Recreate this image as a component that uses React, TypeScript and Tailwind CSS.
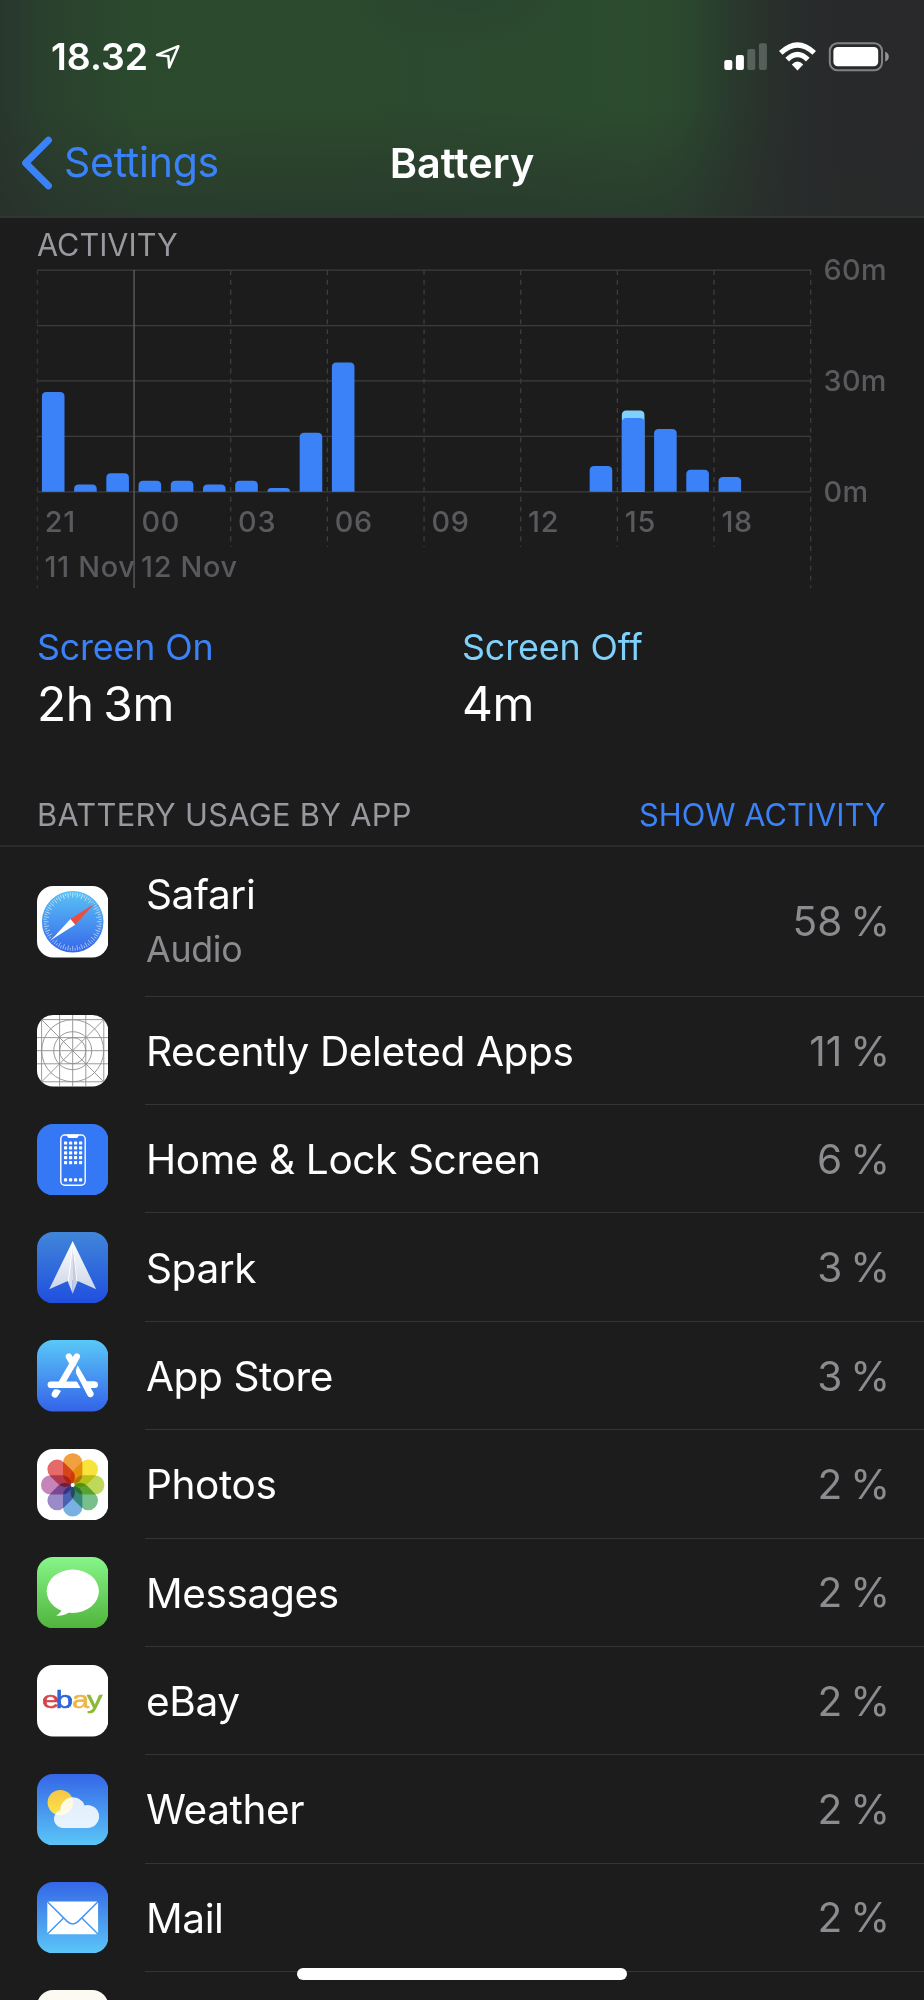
import type { ReactNode } from "react";

const ICON = "h-[71.4px] w-[71.4px] shrink-0";

const IconBase = ({
  id,
  from,
  to = from,
  children,
}: {
  id: string;
  from: string;
  to?: string;
  children?: ReactNode;
}) => (
  <svg viewBox="0 0 71.4 71.4" className={ICON}>
    <defs>
      <linearGradient
        id={id}
        gradientUnits="userSpaceOnUse"
        x1="0"
        y1="0"
        x2="0"
        y2="71.4"
      >
        <stop offset="0" stopColor={from} />
        <stop offset="1" stopColor={to} />
      </linearGradient>
      <clipPath id={`${id}-clip`}>
        <rect width="71.4" height="71.4" rx="16" />
      </clipPath>
    </defs>
    <rect width="71.4" height="71.4" rx="16" fill={`url(#${id})`} />
    <g clipPath={`url(#${id}-clip)`}>{children}</g>
  </svg>
);

const SafariIcon = () => (
  <IconBase id="safari" from="#ffffff">
    <defs>
      <linearGradient id="safari-dial" x1="0" y1="0" x2="0" y2="1">
        <stop offset="0" stopColor="#5bc3f5" />
        <stop offset="1" stopColor="#3567ea" />
      </linearGradient>
    </defs>
    <circle cx="35.7" cy="35.7" r="30.8" fill="url(#safari-dial)" />
    {Array.from({ length: 72 }, (_, i) => (
      <line
        key={i}
        x1="35.7"
        x2="35.7"
        y1="6.6"
        y2={i % 2 ? 9.4 : 11.6}
        stroke="#fff"
        strokeOpacity="0.75"
        strokeWidth="0.7"
        transform={`rotate(${i * 5} 35.7 35.7)`}
      />
    ))}
    <path d="M57.6 17.4 33.4 33.1 38.2 38.7Z" fill="#eb4e3d" />
    <path d="M14.4 53.8 33.4 33.1 38.2 38.7Z" fill="#fff" />
  </IconBase>
);

const PlaceholderIcon = () => (
  <IconBase id="placeholder" from="#ffffff">
    <g fill="none" stroke="#8f8f8f" strokeWidth="0.9">
      {[4.6, 22.6, 35.7, 48.8, 66.8].map((p) => (
        <path key={p} d={`M${p} 0V71.4M0 ${p}H71.4`} />
      ))}
      <path d="M0 0 71.4 71.4M71.4 0 0 71.4" />
      <circle cx="35.7" cy="35.7" r="31" />
      <circle cx="35.7" cy="35.7" r="19" />
      <circle cx="35.7" cy="35.7" r="13.1" />
    </g>
  </IconBase>
);

const HomeScreenIcon = () => (
  <IconBase id="home-screen" from="#3478f6">
    <rect
      x="23.8"
      y="11"
      width="24.4"
      height="50.2"
      rx="4"
      fill="none"
      stroke="#fff"
      strokeWidth="1.4"
    />
    <path d="M29.5 10.6h12.6l-1 2.4q-.5 1-1.6 1h-7.4q-1.1 0-1.6-1Z" fill="#fff" />
    {[17.4, 22.3, 27.2, 32.1, 37, 54.3].map((y) =>
      [27, 32, 37, 42].map((x) => (
        <rect key={`${x}-${y}`} x={x} y={y} width="3.2" height="3.2" rx="0.7" fill="#fff" />
      ))
    )}
  </IconBase>
);

const SparkIcon = () => (
  <IconBase id="spark" from="#4186d9" to="#1f4fdf">
    <defs>
      <linearGradient id="spark-plane" x1="0" y1="0" x2="0" y2="1">
        <stop offset="0" stopColor="#ffffff" />
        <stop offset="1" stopColor="#cdd6e8" />
      </linearGradient>
    </defs>
    <path d="M35.7 9 59.2 57.2 40.6 49 35.7 48 30.8 49 12.2 57.2Z" fill="url(#spark-plane)" />
    <path d="M35.7 12 40.8 49 35.7 61.8Z" fill="#c3cde0" />
    <path d="M35.7 12 30.6 49 35.7 61.8Z" fill="#d9e0ec" />
    <path d="M35.7 12 31.4 49M35.7 12 40 49" stroke="#fff" strokeWidth="1" />
  </IconBase>
);

const AppStoreIcon = () => (
  <IconBase id="app-store" from="#5ac8f8" to="#3463e8">
    <g fill="none" stroke="#fff" strokeWidth="6.4" strokeLinecap="round">
      <path d="M13.8 44.7H57.8" />
      <path d="M39.8 16.6 25 42.4" />
      <path d="M31.9 16.6 36 23.6" />
    </g>
    <path d="M10 47.9H30L23 54Z" fill="url(#app-store)" />
    <path d="M38.6 31 52 54.6" stroke="url(#app-store)" strokeWidth="8" />
    <path d="M44 41.5H58V47.9H48Z" fill="#fff" />
    <path
      d="M40.7 25.6Q38 30.4 39.4 34L50.4 55.2A3.2 3.2 0 0 0 56.4 52.6Z"
      fill="#fff"
    />
    <path
      d="M15 52.8 17 49.6Q20.6 48.4 24 50.9L21 55.8A3.2 3.2 0 0 1 15 52.8Z"
      fill="#fff"
    />
  </IconBase>
);

const petals = [
  "#f0a03f",
  "#f6e33c",
  "#bdd85a",
  "#77c08c",
  "#77b2e2",
  "#9a8bc8",
  "#c685ba",
  "#e56a68",
];

const PhotosIcon = () => (
  <IconBase id="photos" from="#ffffff">
    <g className="isolate">
      {petals.map((color, i) => (
        <rect
          key={color}
          x="26"
          y="4.2"
          width="19.4"
          height="30.8"
          rx="9.6"
          fill={color}
          className="mix-blend-multiply"
          transform={`rotate(${i * 45} 35.7 35.9)`}
        />
      ))}
    </g>
    <circle cx="35.7" cy="35.9" r="2" fill="#fff" />
  </IconBase>
);

const MessagesIcon = () => (
  <IconBase id="messages" from="#87f588" to="#50b43c">
    <ellipse cx="35.8" cy="34.2" rx="26.1" ry="21.7" fill="#fff" />
    <path d="M25.2 50.5Q24.6 56 19.2 58.6 26.5 59.4 32.4 55Z" fill="#fff" />
  </IconBase>
);

const ebayLetters = [
  { char: "e", x: 5, color: "#d8434b" },
  { char: "b", x: 18.8, color: "#2a66d8" },
  { char: "a", x: 35, color: "#f0b545" },
  { char: "y", x: 50, color: "#8bb932" },
];

const EbayIcon = () => (
  <IconBase id="ebay" from="#ffffff">
    {ebayLetters.map((l) => (
      <text
        key={l.char}
        transform={`translate(${l.x} 42.6) scale(1.26 1)`}
        fontFamily="Liberation Sans, sans-serif"
        fontSize="24.5"
        fill={l.color}
        stroke={l.color}
        strokeWidth="0.6"
      >
        {l.char}
      </text>
    ))}
  </IconBase>
);

const WeatherIcon = () => (
  <IconBase id="weather" from="#3566e7" to="#5bc6f7">
    <defs>
      <linearGradient id="weather-sun" x1="0" y1="0" x2="0" y2="1">
        <stop offset="0" stopColor="#f6c544" />
        <stop offset="1" stopColor="#fbe54a" />
      </linearGradient>
    </defs>
    <circle cx="23.3" cy="28.6" r="12.7" fill="url(#weather-sun)" />
    <path
      d="M25.6 54A9.2 9.2 0 0 1 23.2 36.1 12.6 12.6 0 0 1 47.6 31.4 11.5 11.5 0 1 1 50.2 54Z"
      fill="#fff"
      fillOpacity="0.86"
    />
  </IconBase>
);

const MailIcon = () => (
  <IconBase id="mail" from="#3566e7" to="#5bc6f7">
    <rect x="10.3" y="19.6" width="50.8" height="32.6" rx="1.6" fill="#fff" />
    <g fill="none" stroke="#4a97f0" strokeWidth="1.5">
      <path d="M10.4 19.8 30.2 39.4Q35.7 44.6 41.2 39.4L61 19.8" />
      <path d="M10.4 52 26.6 36M61 52 44.8 36" />
    </g>
  </IconBase>
);

type AppUsage = {
  name: string;
  percent: string;
  icon: ReactNode;
  detail?: string;
};

const apps: AppUsage[] = [
  { name: "Safari", detail: "Audio", percent: "58 %", icon: <SafariIcon /> },
  { name: "Recently Deleted Apps", percent: "11 %", icon: <PlaceholderIcon /> },
  { name: "Home & Lock Screen", percent: "6 %", icon: <HomeScreenIcon /> },
  { name: "Spark", percent: "3 %", icon: <SparkIcon /> },
  { name: "App Store", percent: "3 %", icon: <AppStoreIcon /> },
  { name: "Photos", percent: "2 %", icon: <PhotosIcon /> },
  { name: "Messages", percent: "2 %", icon: <MessagesIcon /> },
  { name: "eBay", percent: "2 %", icon: <EbayIcon /> },
  { name: "Weather", percent: "2 %", icon: <WeatherIcon /> },
  { name: "Mail", percent: "2 %", icon: <MailIcon /> },
];

// minutes of activity per hour, starting at 21:00
const activity = [
  { hour: 0, on: 27 },
  { hour: 1, on: 2 },
  { hour: 2, on: 5 },
  { hour: 3, on: 3 },
  { hour: 4, on: 3 },
  { hour: 5, on: 2 },
  { hour: 6, on: 3 },
  { hour: 7, on: 1 },
  { hour: 8, on: 16 },
  { hour: 9, on: 35 },
  { hour: 17, on: 7 },
  { hour: 18, on: 20, off: 2 },
  { hour: 19, on: 17 },
  { hour: 20, on: 6 },
  { hour: 21, on: 4 },
];

const hours = ["21", "00", "03", "06", "09", "12", "15", "18"];

const LEFT = 37.4;
const BASE = 491.8;
const MINUTE = 3.695;
const COLUMN = 96.66;

const barPath = (x: number, minutes: number) => {
  const h = minutes * MINUTE;
  const r = Math.min(4.5, h);
  return `M${x} ${BASE}V${BASE - h + r}q0 ${-r} ${r} ${-r}h${22.6 - 2 * r}q${r} 0 ${r} ${r}V${BASE}Z`;
};

const ActivityChart = () => (
  <svg
    viewBox="0 267 924 333"
    className="block h-[333px] w-[924px] overflow-visible"
  >
    <g fill="none" strokeWidth="1.3">
      {[0, 15, 30, 45, 60].map((m) => (
        <path
          key={m}
          d={`M37 ${BASE - m * MINUTE}H811`}
          stroke="#3c3c3e"
        />
      ))}
      {[0, 1, 2, 3, 4, 5, 6, 7, 8].map((i) => (
        <path
          key={i}
          d={`M${LEFT + i * COLUMN} 270V${i < 2 || i === 8 ? 588 : 547}`}
          stroke={i === 1 ? "#5f5f62" : i === 0 ? "#343436" : "#3e3e40"}
          strokeDasharray={i === 1 ? undefined : "4.93 4.93"}
        />
      ))}
    </g>
    {activity.map(({ hour, on, off = 0 }) => {
      const x = 41.9 + hour * 32.22;
      return (
        <g key={hour}>
          {off > 0 && <path d={barPath(x, on + off)} fill="#7fd0fa" />}
          <path d={barPath(x, on)} fill="#3b82f8" />
        </g>
      );
    })}
    <g
      fill="#5a5a5e"
      fontFamily="Inter, sans-serif"
      fontSize="28.8"
      fontWeight="500"
    >
      <g letterSpacing="0.7">
        {hours.map((h, i) => (
          <text key={h} x={44.8 + i * COLUMN} y="532">
            {h}
          </text>
        ))}
        <text x="44.6" y="577">11 Nov</text>
        <text x="141" y="577">12 Nov</text>
      </g>
      <g letterSpacing="0.3">
        <text x="823.6" y="280.3">60m</text>
        <text x="823.6" y="391.2">30m</text>
        <text x="823.6" y="502">0m</text>
      </g>
    </g>
  </svg>
);

const StatusBar = () => (
  <div className="flex h-[113px] items-center pr-[34px] pl-[51px]">
    <span className="pt-[2px] text-[37.4px] font-semibold text-white">
      18.32
    </span>
    <svg viewBox="0 0 26 26" className="ml-[7px] h-[26px] w-[26px]">
      <path
        d="M23.4 2.2 2 10.9l11.3 1.3L14.2 23.6Z"
        fill="none"
        stroke="#fff"
        strokeWidth="2.5"
        strokeLinejoin="round"
      />
    </svg>
    <svg viewBox="724 42 166 30" className="ml-auto h-[30px] w-[166px]">
      <g fill="#fff">
        <rect x="724.3" y="60" width="8" height="10" rx="2" />
        <rect x="735.9" y="55" width="8" height="15" rx="2" />
        <rect x="747.3" y="49" width="8" height="21" rx="2" fillOpacity="0.22" />
        <rect x="758.9" y="43.2" width="8" height="26.8" rx="2" fillOpacity="0.22" />
        <path d="M797.5 70.4 791.8 64.4Q797.5 58.4 803.2 64.4Z" />
      </g>
      <g fill="none" stroke="#fff" strokeWidth="5.2">
        <path d="M780.8 52.9Q797.5 37 814.2 52.9" />
        <path d="M787.2 59.7Q797.5 49.5 807.8 59.7" />
      </g>
      <rect
        x="829.8"
        y="43.2"
        width="52.2"
        height="27"
        rx="7.6"
        fill="none"
        stroke="#fff"
        strokeOpacity="0.42"
        strokeWidth="2"
      />
      <rect x="833.4" y="46.9" width="44.8" height="19.4" rx="4.2" fill="#fff" />
      <path d="M885.2 51.8q3.6 1.4 3.6 4.9t-3.6 4.9Z" fill="#fff" fillOpacity="0.5" />
    </svg>
  </div>
);

const NavBar = () => (
  <div className="grid h-[100px] grid-cols-[1fr_auto_1fr] items-center">
    <div className="flex items-center pl-[20px]">
      <svg viewBox="0 0 34 54" className="h-[54px] w-[34px]">
        <path
          d="M28.4 4.3 5.6 27 28.4 49.7"
          fill="none"
          stroke="#3b82f8"
          strokeWidth="7"
          strokeLinecap="round"
          strokeLinejoin="round"
        />
      </svg>
      <span className="ml-[10px] text-[41px] tracking-[-0.25px] text-[#3b82f8]">
        Settings
      </span>
    </div>
    <h1 className="text-[41.4px] font-semibold text-white">Battery</h1>
    <div />
  </div>
);

const UsageRow = ({ app }: { app: AppUsage }) => (
  <div
    className={
      app.detail
        ? "flex h-[149.8px] items-center pl-[37px]"
        : "flex h-[108.35px] items-center pl-[37px]"
    }
  >
    {app.icon}
    <div className="ml-[36.6px] flex h-full flex-1 items-center justify-between border-b border-[#343436] pr-[34px] pl-[1px]">
      <div className={app.detail ? "pt-[1px]" : "pt-[3px]"}>
        <p className="text-[40.6px] leading-[54px] tracking-[-0.4px] text-white">
          {app.name}
        </p>
        {app.detail && (
          <p className="text-[35.8px] leading-[54px] tracking-[-0.3px] text-[#8b8b90]">
            {app.detail}
          </p>
        )}
      </div>
      <p className="pt-[3px] text-[40.6px] [word-spacing:-3.5px] text-[#8b8b90]">
        {app.percent}
      </p>
    </div>
  </div>
);

const App = () => {
  return (
    <div className="relative h-[2000px] w-[924px] overflow-hidden bg-[#1c1c1c] font-['Inter',sans-serif]">
      <header className="h-[218px] border-b-2 border-[#333534] bg-[radial-gradient(ellipse_120px_50px_at_470px_0px,rgba(40,66,48,0.6),rgba(40,66,48,0)),linear-gradient(to_bottom,rgba(40,44,43,0)_50%,rgba(40,44,43,0.5)_100%),linear-gradient(to_right,#28372d_0px,#2a412d_50px,#2b4a2d_140px,#2b492e_420px,#2c4c2f_640px,#2b482e_680px,#2a412d_708px,#29382d_738px,#28302c_772px,#282a2b_820px,#28282a_924px)]">
        <StatusBar />
        <NavBar />
      </header>

      <main>
        <section>
          <h2 className="mt-[5px] pl-[37px] text-[30.6px] leading-[44px] text-[#98989f]">
            ACTIVITY
          </h2>
          <ActivityChart />
          <div className="flex pt-[22px] pl-[37px]">
            <div className="w-[425px]">
              <p className="text-[35.8px] leading-[50px] tracking-[-0.15px] text-[#3b82f8]">
                Screen On
              </p>
              <p className="text-[47.8px] leading-[65px] tracking-[-0.5px] [word-spacing:-3px] text-white">
                2h 3m
              </p>
            </div>
            <div>
              <p className="text-[35.8px] leading-[50px] tracking-[-0.1px] text-[#7fd0fa]">
                Screen Off
              </p>
              <p className="text-[47.8px] leading-[65px] tracking-[-0.5px] text-white">
                4m
              </p>
            </div>
          </div>
        </section>

        <section>
          <div className="mt-[47px] flex h-[63px] items-center justify-between border-b-2 border-[#2b2b2c] pt-[1px] pr-[38px] pl-[37px] text-[30.8px]">
            <h2 className="tracking-[0.28px] text-[#98989f]">
              BATTERY USAGE BY APP
            </h2>
            <button className="text-[#3b82f8]">SHOW ACTIVITY</button>
          </div>
          {apps.map((app) => (
            <UsageRow key={app.name} app={app} />
          ))}
          <div className="pt-[18.5px] pl-[37px]">
            <IconBase id="next-app" from="#fdf9f3" />
          </div>
        </section>
      </main>

      <div className="absolute top-[1968px] left-[297px] h-[12px] w-[330px] rounded-full bg-white" />
    </div>
  );
};

export default App;
